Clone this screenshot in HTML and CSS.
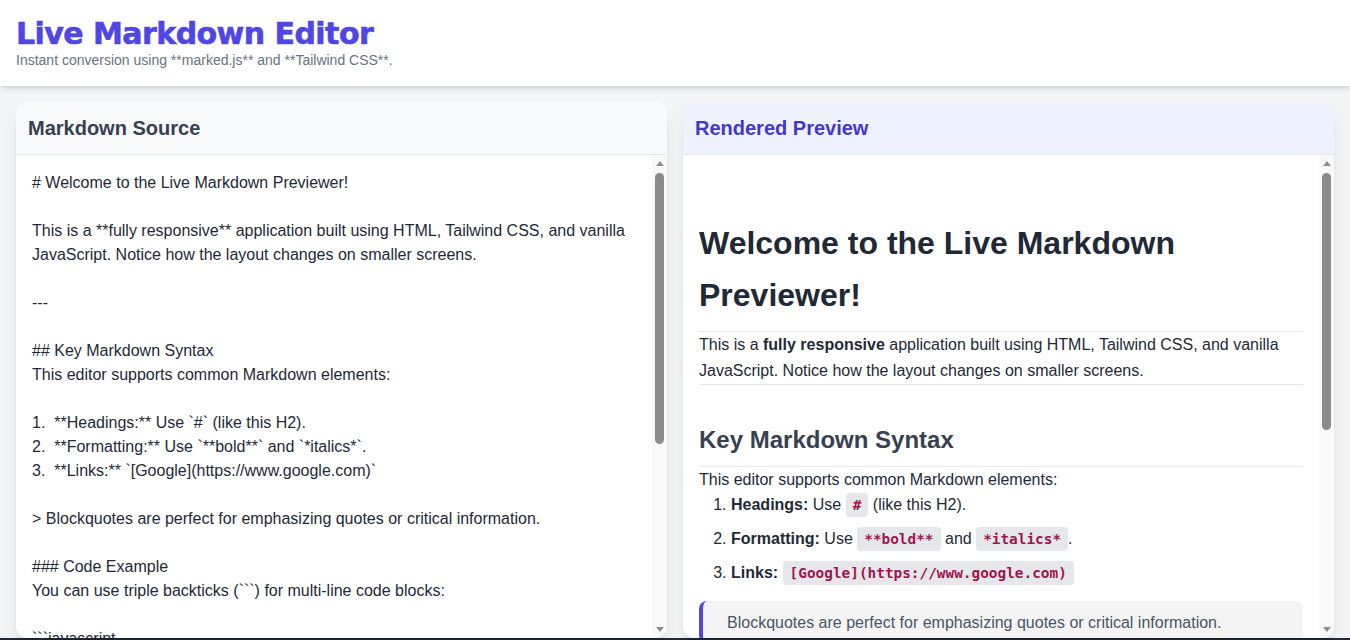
FILE: index.html
```html
<!DOCTYPE html>
<html lang="en">
<head>
<meta charset="utf-8">
<title>Live Markdown Editor</title>
<link rel="stylesheet" href="styles.css">
</head>
<body>
<header class="app-header">
  <h1 class="app-title">Live Markdown Editor</h1>
  <p class="app-subtitle">Instant conversion using **marked.js** and **Tailwind CSS**.</p>
</header>
<main class="workspace">
  <section class="panel">
    <h2 class="panel-head">Markdown Source</h2>
    <div class="panel-body">
    <textarea class="source" spellcheck="false"># Welcome to the Live Markdown Previewer!

This is a **fully responsive** application built using HTML, Tailwind CSS, and vanilla JavaScript. Notice how the layout changes on smaller screens.

---

## Key Markdown Syntax
This editor supports common Markdown elements:

1.  **Headings:** Use `#` (like this H2).
2.  **Formatting:** Use `**bold**` and `*italics*`.
3.  **Links:** `[Google](https://www.google.com)`

> Blockquotes are perfect for emphasizing quotes or critical information.

### Code Example
You can use triple backticks (&#96;&#96;&#96;) for multi-line code blocks:

&#96;&#96;&#96;javascript
function greet(name) {
  console.log(`Hello, ${name}!`);
}
greet('World');
&#96;&#96;&#96;

### Unordered Lists
- Item one
- Item two
- Item three

Happy writing!</textarea>
    <div class="scrollbar" aria-hidden="true">
      <span class="sb-arrow sb-up"></span>
      <div class="sb-track"><div class="sb-thumb" style="height:271px"></div></div>
      <span class="sb-arrow sb-down"></span>
    </div>
    </div>
  </section>
  <section class="panel">
    <h2 class="panel-head panel-head--accent">Rendered Preview</h2>
    <div class="panel-body">
    <div class="preview">
      <h1>Welcome to the Live Markdown Previewer!</h1>
      <p>This is a <strong>fully responsive</strong> application built using HTML, Tailwind CSS, and vanilla JavaScript. Notice how the layout changes on smaller screens.</p>
      <hr>
      <h2>Key Markdown Syntax</h2>
      <p>This editor supports common Markdown elements:</p>
      <ol>
        <li><strong>Headings:</strong> Use <code>#</code> (like this H2).</li>
        <li><strong>Formatting:</strong> Use <code>**bold**</code> and <code>*italics*</code>.</li>
        <li><strong>Links:</strong> <code>[Google](https://www.google.com)</code></li>
      </ol>
      <blockquote><p>Blockquotes are perfect for emphasizing quotes or critical information.</p></blockquote>
      <h3>Code Example</h3>
      <p>You can use triple backticks (&#96;&#96;&#96;) for multi-line code blocks:</p>
      <pre><code>function greet(name) {
  console.log(`Hello, ${name}!`);
}
greet('World');</code></pre>
      <h3>Unordered Lists</h3>
      <ul>
        <li>Item one</li>
        <li>Item two</li>
        <li>Item three</li>
      </ul>
      <p>Happy writing!</p>
    </div>
    <div class="scrollbar" aria-hidden="true">
      <span class="sb-arrow sb-up"></span>
      <div class="sb-track"><div class="sb-thumb" style="height:257px"></div></div>
      <span class="sb-arrow sb-down"></span>
    </div>
    </div>
  </section>
</main>
<footer class="app-footer">Built with marked.js and Tailwind CSS</footer>
</body>
</html>
```
FILE: styles.css
```css
* { box-sizing: border-box; margin: 0; padding: 0; }

body {
  font-family: "Liberation Sans", Arial, sans-serif;
  background: #f3f4f6;
  color: #1f2937;
}

.app-header {
  position: relative;
  z-index: 1;
  height: 86px;
  padding: 17px 16px 16px;
  background: #ffffff;
  box-shadow: 0 4px 6px -1px rgba(0,0,0,0.1), 0 2px 4px -2px rgba(0,0,0,0.1);
}

.app-title {
  font-family: "DejaVu Sans", "Liberation Sans", sans-serif;
  font-weight: 700;
  font-size: 30px;
  line-height: 34px;
  letter-spacing: -0.55px;
  color: #4f46e5;
  -webkit-text-stroke: 0.6px #4f46e5;
}

.app-subtitle {
  font-size: 14px;
  line-height: 19px;
  color: #6b7280;
}

.workspace {
  display: grid;
  grid-template-columns: 1fr 1fr;
  gap: 16px;
  padding: 16px 16px 0;
  height: 552px;
}

.panel {
  display: flex;
  flex-direction: column;
  min-height: 0;
  background: #ffffff;
  border-radius: 12px;
  overflow: hidden;
  box-shadow: 0 10px 15px -3px rgba(0,0,0,0.1), 0 4px 6px -4px rgba(0,0,0,0.1);
}

.panel-head {
  padding: 12px;
  font-size: 20px;
  line-height: 28px;
  font-weight: 700;
  color: #374151;
  background: #f9fafb;
  border-bottom: 1px solid #e5e7eb;
}

.panel-head--accent {
  color: #4338ca;
  background: #eef2ff;
}

.panel-body {
  flex: 1;
  min-height: 0;
  display: flex;
}

/* drawn scrollbar */
.scrollbar {
  flex: 0 0 15px;
  display: flex;
  flex-direction: column;
  align-items: center;
  background: #f9f9f9;
}

.sb-arrow {
  flex: 0 0 16px;
  width: 15px;
  display: flex;
  justify-content: center;
  align-items: center;
}

.sb-arrow::before {
  content: "";
  width: 0;
  height: 0;
  border-left: 4.5px solid transparent;
  border-right: 4.5px solid transparent;
}

.sb-up::before {
  border-bottom: 5px solid #8f8f8f;
  margin-top: 1px;
}

.sb-down::before {
  border-top: 5px solid #8f8f8f;
  margin-bottom: 1px;
}

.sb-track {
  flex: 1;
  width: 15px;
  padding-top: 2px;
  display: flex;
  flex-direction: column;
  align-items: center;
}

.sb-thumb {
  width: 9px;
  border-radius: 5px;
  background: #8b8b8b;
}

.source {
  flex: 1;
  min-width: 0;
  height: 100%;
  padding: 16px;
  border: none;
  outline: none;
  resize: none;
  overflow-y: hidden;
  scrollbar-width: none;
  font-family: "Liberation Sans", Arial, sans-serif;
  font-size: 16px;
  line-height: 24px;
  color: #1f2937;
  background: #ffffff;
}

.preview {
  flex: 1;
  min-width: 0;
  overflow: hidden;
  padding: 16px;
  font-size: 16px;
  line-height: 26px;
  color: #1f2937;
}

.preview h1 {
  margin-top: 46px;
  padding-bottom: 10px;
  font-size: 32px;
  line-height: 52px;
  font-weight: 700;
  color: #1f2937;
  border-bottom: 1px solid #e5e7eb;
}

.preview hr {
  border: 0;
  border-top: 1px solid #e5e7eb;
}

.preview h2 {
  margin-top: 37px;
  padding-bottom: 8px;
  font-size: 24px;
  line-height: 36px;
  font-weight: 700;
  color: #374151;
  border-bottom: 1px solid #e5e7eb;
}

.preview h3 {
  margin-top: 24px;
  font-size: 20px;
  line-height: 30px;
  font-weight: 700;
  color: #374151;
}

.preview ol,
.preview ul {
  padding-left: 32px;
}

.preview ol li {
  line-height: 24px;
  margin-bottom: 10px;
}

.preview ol li:last-child {
  margin-bottom: 0;
}

.preview code {
  font-family: "DejaVu Sans Mono", "Liberation Mono", monospace;
  font-size: 14.4px;
  font-weight: 700;
  color: #9d174d;
  background: #e5e7eb;
  padding: 4px 7px;
  border-radius: 4px;
}

.preview blockquote {
  margin-top: 16px;
  padding: 9px 24px 7px;
  border-left: 4px solid #4f46e5;
  border-radius: 8px;
  background: #f4f4f5;
  color: #4b5563;
}

.preview pre {
  margin-top: 12px;
  padding: 16px;
  border-radius: 8px;
  background: #1f2937;
  line-height: 20px;
}

.preview pre code {
  padding: 0;
  background: none;
  color: #e5e7eb;
  font-weight: 400;
  font-size: 14px;
}

.app-footer {
  height: 40px;
  padding: 10px 16px;
  background: #1f2937;
  color: #9ca3af;
  font-size: 13px;
  text-align: center;
}
```
